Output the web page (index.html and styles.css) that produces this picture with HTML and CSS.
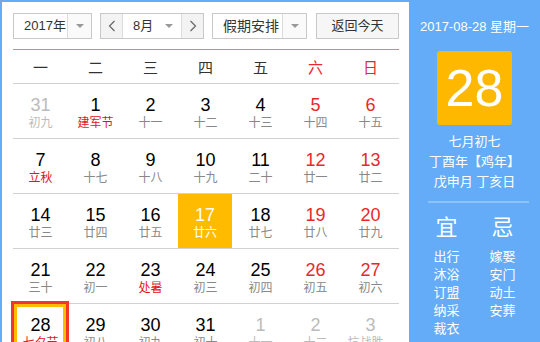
FILE: index.html
```html
<!DOCTYPE html>
<html lang="zh-CN">
<head>
<meta charset="utf-8">
<title>万年历</title>
<link rel="stylesheet" href="styles.css">
</head>
<body>
<div class="cal">
  <div class="main">
    <div class="toolbar">
      <div class="select year">
        <span class="val">2017年</span>
        <span class="drop"><i class="tri"></i></span>
      </div>
      <div class="select month">
        <span class="nav"><svg width="8" height="12" viewBox="0 0 8 12"><polyline points="6.5,1 1.5,6 6.5,11" fill="none" stroke="#666" stroke-width="1.2"/></svg></span>
        <span class="val">8月<i class="tri"></i></span>
        <span class="nav next"><svg width="8" height="12" viewBox="0 0 8 12"><polyline points="1.5,1 6.5,6 1.5,11" fill="none" stroke="#666" stroke-width="1.2"/></svg></span>
      </div>
      <div class="select holiday">
        <span class="val">假期安排</span>
        <span class="drop"><i class="tri"></i></span>
      </div>
      <div class="btn">返回今天</div>
    </div>
    <div class="grid">
      <div class="week">
        <span>一</span><span>二</span><span>三</span><span>四</span><span>五</span><span class="we">六</span><span class="we">日</span>
      </div>
      <div class="row">
        <div class="cell other"><b>31</b><em>初九</em></div>
        <div class="cell"><b>1</b><em class="fest">建军节</em></div>
        <div class="cell"><b>2</b><em>十一</em></div>
        <div class="cell"><b>3</b><em>十二</em></div>
        <div class="cell"><b>4</b><em>十三</em></div>
        <div class="cell we"><b>5</b><em>十四</em></div>
        <div class="cell we"><b>6</b><em>十五</em></div>
      </div>
      <div class="row">
        <div class="cell"><b>7</b><em class="fest">立秋</em></div>
        <div class="cell"><b>8</b><em>十七</em></div>
        <div class="cell"><b>9</b><em>十八</em></div>
        <div class="cell"><b>10</b><em>十九</em></div>
        <div class="cell"><b>11</b><em>二十</em></div>
        <div class="cell we"><b>12</b><em>廿一</em></div>
        <div class="cell we"><b>13</b><em>廿二</em></div>
      </div>
      <div class="row">
        <div class="cell"><b>14</b><em>廿三</em></div>
        <div class="cell"><b>15</b><em>廿四</em></div>
        <div class="cell"><b>16</b><em>廿五</em></div>
        <div class="cell sel"><b>17</b><em>廿六</em></div>
        <div class="cell"><b>18</b><em>廿七</em></div>
        <div class="cell we"><b>19</b><em>廿八</em></div>
        <div class="cell we"><b>20</b><em>廿九</em></div>
      </div>
      <div class="row">
        <div class="cell"><b>21</b><em>三十</em></div>
        <div class="cell"><b>22</b><em>初一</em></div>
        <div class="cell"><b>23</b><em class="fest">处暑</em></div>
        <div class="cell"><b>24</b><em>初三</em></div>
        <div class="cell"><b>25</b><em>初四</em></div>
        <div class="cell we"><b>26</b><em>初五</em></div>
        <div class="cell we"><b>27</b><em>初六</em></div>
      </div>
      <div class="row">
        <div class="cell today"><b>28</b><em class="fest">七夕节</em></div>
        <div class="cell"><b>29</b><em>初八</em></div>
        <div class="cell"><b>30</b><em>初九</em></div>
        <div class="cell"><b>31</b><em>初十</em></div>
        <div class="cell other"><b>1</b><em>十一</em></div>
        <div class="cell other"><b>2</b><em>十二</em></div>
        <div class="cell other"><b>3</b><em>抗战胜...</em></div>
      </div>
    </div>
  </div>
  <div class="panel">
    <div class="date">2017-08-28 星期一</div>
    <div class="big">28</div>
    <div class="lunar">
      <p>七月初七</p>
      <p>丁酉年【鸡年】</p>
      <p>戊申月 丁亥日</p>
    </div>
    <div class="sep"></div>
    <div class="yiji">
      <div class="col">
        <div class="head">宜</div>
        <p>出行</p><p>沐浴</p><p>订盟</p><p>纳采</p><p>裁衣</p>
      </div>
      <div class="col">
        <div class="head">忌</div>
        <p>嫁娶</p><p>安门</p><p>动土</p><p>安葬</p>
      </div>
    </div>
  </div>
</div>
</body>
</html>
```

FILE: styles.css
```css
* { box-sizing: border-box; }
html, body { margin: 0; padding: 0; background: #fff; }
body {
  font-family: "Liberation Sans", "Noto Sans CJK SC", sans-serif;
  color: #000;
}
.cal {
  display: flex;
  width: 540px;
  height: 342px;
  border-top: 2px solid #64acf8;
  border-left: 2px solid #64acf8;
  overflow: hidden;
}
.main {
  width: 407px;
  flex: none;
  padding: 11px 10px 0 11px;
}
.toolbar {
  display: flex;
  height: 26px;
  font-size: 13px;
  color: #333;
}
.select {
  display: flex;
  height: 26px;
  border: 1px solid #c9c9c9;
  background: #fff;
}
.select .val {
  flex: 1;
  display: flex;
  align-items: center;
  line-height: 24px;
}
.drop {
  width: 24px;
  flex: none;
  border-left: 1px solid #dcdcdc;
  display: flex;
  align-items: center;
  justify-content: center;
  background: #fafafa;
}
.tri {
  display: block;
  width: 0;
  height: 0;
  border-left: 4px solid transparent;
  border-right: 4px solid transparent;
  border-top: 4px solid #999;
}
.year { width: 79px; }
.year .val { padding-left: 10px; }
.month { width: 104px; margin-left: 8px; }
.month .val { padding-left: 10px; justify-content: space-between; padding-right: 8px; }
.nav {
  width: 22px;
  flex: none;
  background: #f3f3f3;
  border-right: 1px solid #dcdcdc;
  display: flex;
  align-items: center;
  justify-content: center;
}
.nav.next { border-right: 0; border-left: 1px solid #dcdcdc; }
.holiday { width: 95px; margin-left: 8px; }
.holiday .val { padding-left: 10px; font-size: 14px; }
.btn {
  width: 83px;
  margin-left: 9px;
  height: 26px;
  border: 1px solid #c9c9c9;
  background: #f6f6f6;
  text-align: center;
  line-height: 24px;
}
.grid {
  margin-top: 10px;
  border-top: 1px solid #62aaf6;
  width: 386px;
}
.week {
  display: grid;
  grid-template-columns: repeat(7, 55px);
  height: 34px;
  border-bottom: 1px solid #d2d2d2;
  align-items: center;
  font-size: 15px;
  color: #333;
}
.week span { text-align: center; }
.week .we { color: #e8282d; }
.row {
  display: grid;
  grid-template-columns: repeat(7, 55px);
  height: 55px;
  border-bottom: 1px solid #d2d2d2;
}
.cell {
  position: relative;
  text-align: center;
  padding-top: 11px;
  height: 54px;
}
.cell b {
  display: block;
  font-weight: 400;
  font-size: 18px;
  line-height: 20px;
  color: #000;
}
.cell em {
  display: block;
  font-style: normal;
  font-size: 12px;
  line-height: 16px;
  color: #888;
  white-space: nowrap;
}
.cell.we b { color: #e8282d; }
.cell em.fest { color: #e0161d; }
.cell.other b, .cell.other em { color: #bbb; }
.cell.sel { background: #ffbb00; width: 54px; }
.cell.sel b, .cell.sel em { color: #fff; }
.cell.today::before {
  content: "";
  position: absolute;
  left: -2px;
  right: -1px;
  top: -3px;
  height: 60px;
  border: 3px solid #f2362c;
  box-shadow: inset 0 0 0 3px #ffbb00;
}
.panel {
  flex: 1;
  background: #64acf8;
  color: #fff;
  padding-top: 15px;
  text-align: center;
}
.date {
  font-size: 13px;
  line-height: 20px;
}
.big {
  width: 75px;
  height: 74px;
  margin: 14px auto 0;
  background: #ffb800;
  border-radius: 3px;
  font-size: 52px;
  line-height: 74px;
}
.lunar { margin-top: 7px; font-size: 13px; }
.lunar p { margin: 0; line-height: 20px; }
.sep {
  height: 2px;
  background: #8dc3fb;
  margin: 9px 11px 0 19px;
}
.yiji {
  display: grid;
  grid-template-columns: 56px 56px;
  justify-content: center;
  margin-top: 12px;
}
.yiji .head {
  font-size: 22px;
  line-height: 26px;
  margin-bottom: 7px;
}
.yiji p {
  margin: 0;
  font-size: 13px;
  line-height: 18px;
}
```
